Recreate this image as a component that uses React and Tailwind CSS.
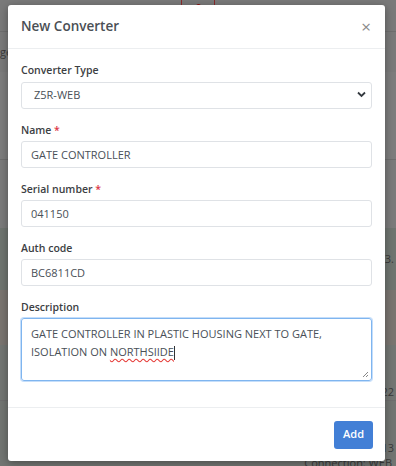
import React, { useState } from "react";

const Field = ({ label, required, children }) => (
  <div className="mb-3">
    <label className="block text-[10.5px] leading-[18px] font-semibold text-[#3c4043] mb-[2px]">
      {label}
      {required && <span className="text-[#dc3545]"> *</span>}
    </label>
    {children}
  </div>
);

const inputCls =
  "w-full h-[27px] px-[9px] text-[11px] text-[#495057] bg-white border border-[#dfe2e6] rounded-[3px] outline-none";

const App = () => {
  const [type, setType] = useState("Z5R-WEB");
  const [name, setName] = useState("GATE CONTROLLER");
  const [serial, setSerial] = useState("041150");
  const [auth, setAuth] = useState("BC6811CD");

  return (
    <div
      className="relative w-[396px] h-[466px] overflow-hidden bg-[#7a7a7a]"
      style={{ fontFamily: "'Open Sans', 'Noto Sans', sans-serif" }}
    >
      {/* page behind the backdrop */}
      <div className="flex flex-col text-[11px] text-[#3a3a3a]">
        <div className="h-[32px] border-b border-[#6e6e6e] flex justify-center">
          <div className="w-[34px] h-[10px] border-x border-b border-[#8a2b2b] flex justify-center">
            <div className="w-[5px] h-[5px] rounded-full bg-[#8a1010] mt-[4px]" />
          </div>
        </div>
        <div className="h-[40px] flex items-center">
          <span>ge</span>
        </div>
        <div className="h-[88px] bg-[#7d7d7d] border-b border-[#6e6e6e]" />
        <div className="h-[68px] bg-[#7b7b7b]" />
        <div className="h-[62px] bg-[#6f7570] flex items-center justify-end pr-[2px]">13.</div>
        <div className="h-[55px] bg-[#7a7570]" />
        <div className="h-[55px] bg-[#737673] flex items-end justify-end pr-[2px]">22</div>
        <div className="h-[66px] bg-[#727572] border-t border-[#6e6e6e] flex justify-end pr-[2px] pt-[42px]">
          <span className="leading-[10px]">13</span>
        </div>
      </div>
      <div className="absolute right-[4px] bottom-[-1px] text-[11px] leading-[8px] text-[#3a3a3a]">Connection: WEB</div>

      {/* modal */}
      <div className="absolute left-[8px] top-[5px] w-[377px] h-[456px] bg-white rounded-[3px] shadow-[0_2px_8px_rgba(0,0,0,0.35)] flex flex-col">
        <div className="h-[44px] px-[13px] flex items-center justify-between border-b border-[#eceef0]">
          <h2 className="text-[13.5px] font-semibold text-[#4a4f55]">New Converter</h2>
          <button className="text-[17px] leading-none text-[#8a8a8a] mr-[1px]">×</button>
        </div>

        <div className="px-[13px] pt-[12px] flex-1">
          <Field label="Converter Type">
            <div className="relative">
              <select
                value={type}
                onChange={(e) => setType(e.target.value)}
                className={inputCls + " appearance-none pl-[12px]"}
              >
                <option>Z5R-WEB</option>
                <option>Z5R-NET</option>
              </select>
              <svg
                className="absolute right-[6px] top-[10px] pointer-events-none"
                width="9"
                height="7"
                viewBox="0 0 9 7"
              >
                <path d="M1 1.5 L4.5 5 L8 1.5" fill="none" stroke="#343a40" strokeWidth="1.8" />
              </svg>
            </div>
          </Field>
          <Field label="Name" required>
            <input className={inputCls} value={name} onChange={(e) => setName(e.target.value)} />
          </Field>
          <Field label="Serial number" required>
            <input className={inputCls} value={serial} onChange={(e) => setSerial(e.target.value)} />
          </Field>
          <Field label="Auth code">
            <input className={inputCls} value={auth} onChange={(e) => setAuth(e.target.value)} />
          </Field>
          <Field label="Description">
            <div className="w-full h-[63px] px-[9px] pt-[6px] text-[11px] leading-[18px] text-[#495057] border border-[#7fb5ef] rounded-[3px] shadow-[0_0_0_1px_rgba(90,160,240,0.35)] relative">
              <div>GATE CONTROLLER IN PLASTIC HOUSING NEXT TO GATE,</div>
              <div>
                ISOLATION ON{" "}
                <span className="underline decoration-wavy decoration-[#e53935] underline-offset-2">NORTHSIIDE</span>
                <span className="inline-block w-px h-[14px] bg-[#333] align-middle" />
              </div>
              <svg className="absolute right-[2px] bottom-[2px]" width="7" height="7" viewBox="0 0 7 7">
                <path d="M1 6 L6 1 M4 6 L6 4" stroke="#888" strokeWidth="1" />
              </svg>
            </div>
          </Field>
        </div>

        <div className="h-[54px] px-[12px] border-t border-[#eceef0] flex items-center justify-end">
          <button className="w-[39px] h-[28px] rounded-[3px] bg-[#427fd6] text-white text-[11px] font-semibold">
            Add
          </button>
        </div>
      </div>
    </div>
  );
};

export default App;
